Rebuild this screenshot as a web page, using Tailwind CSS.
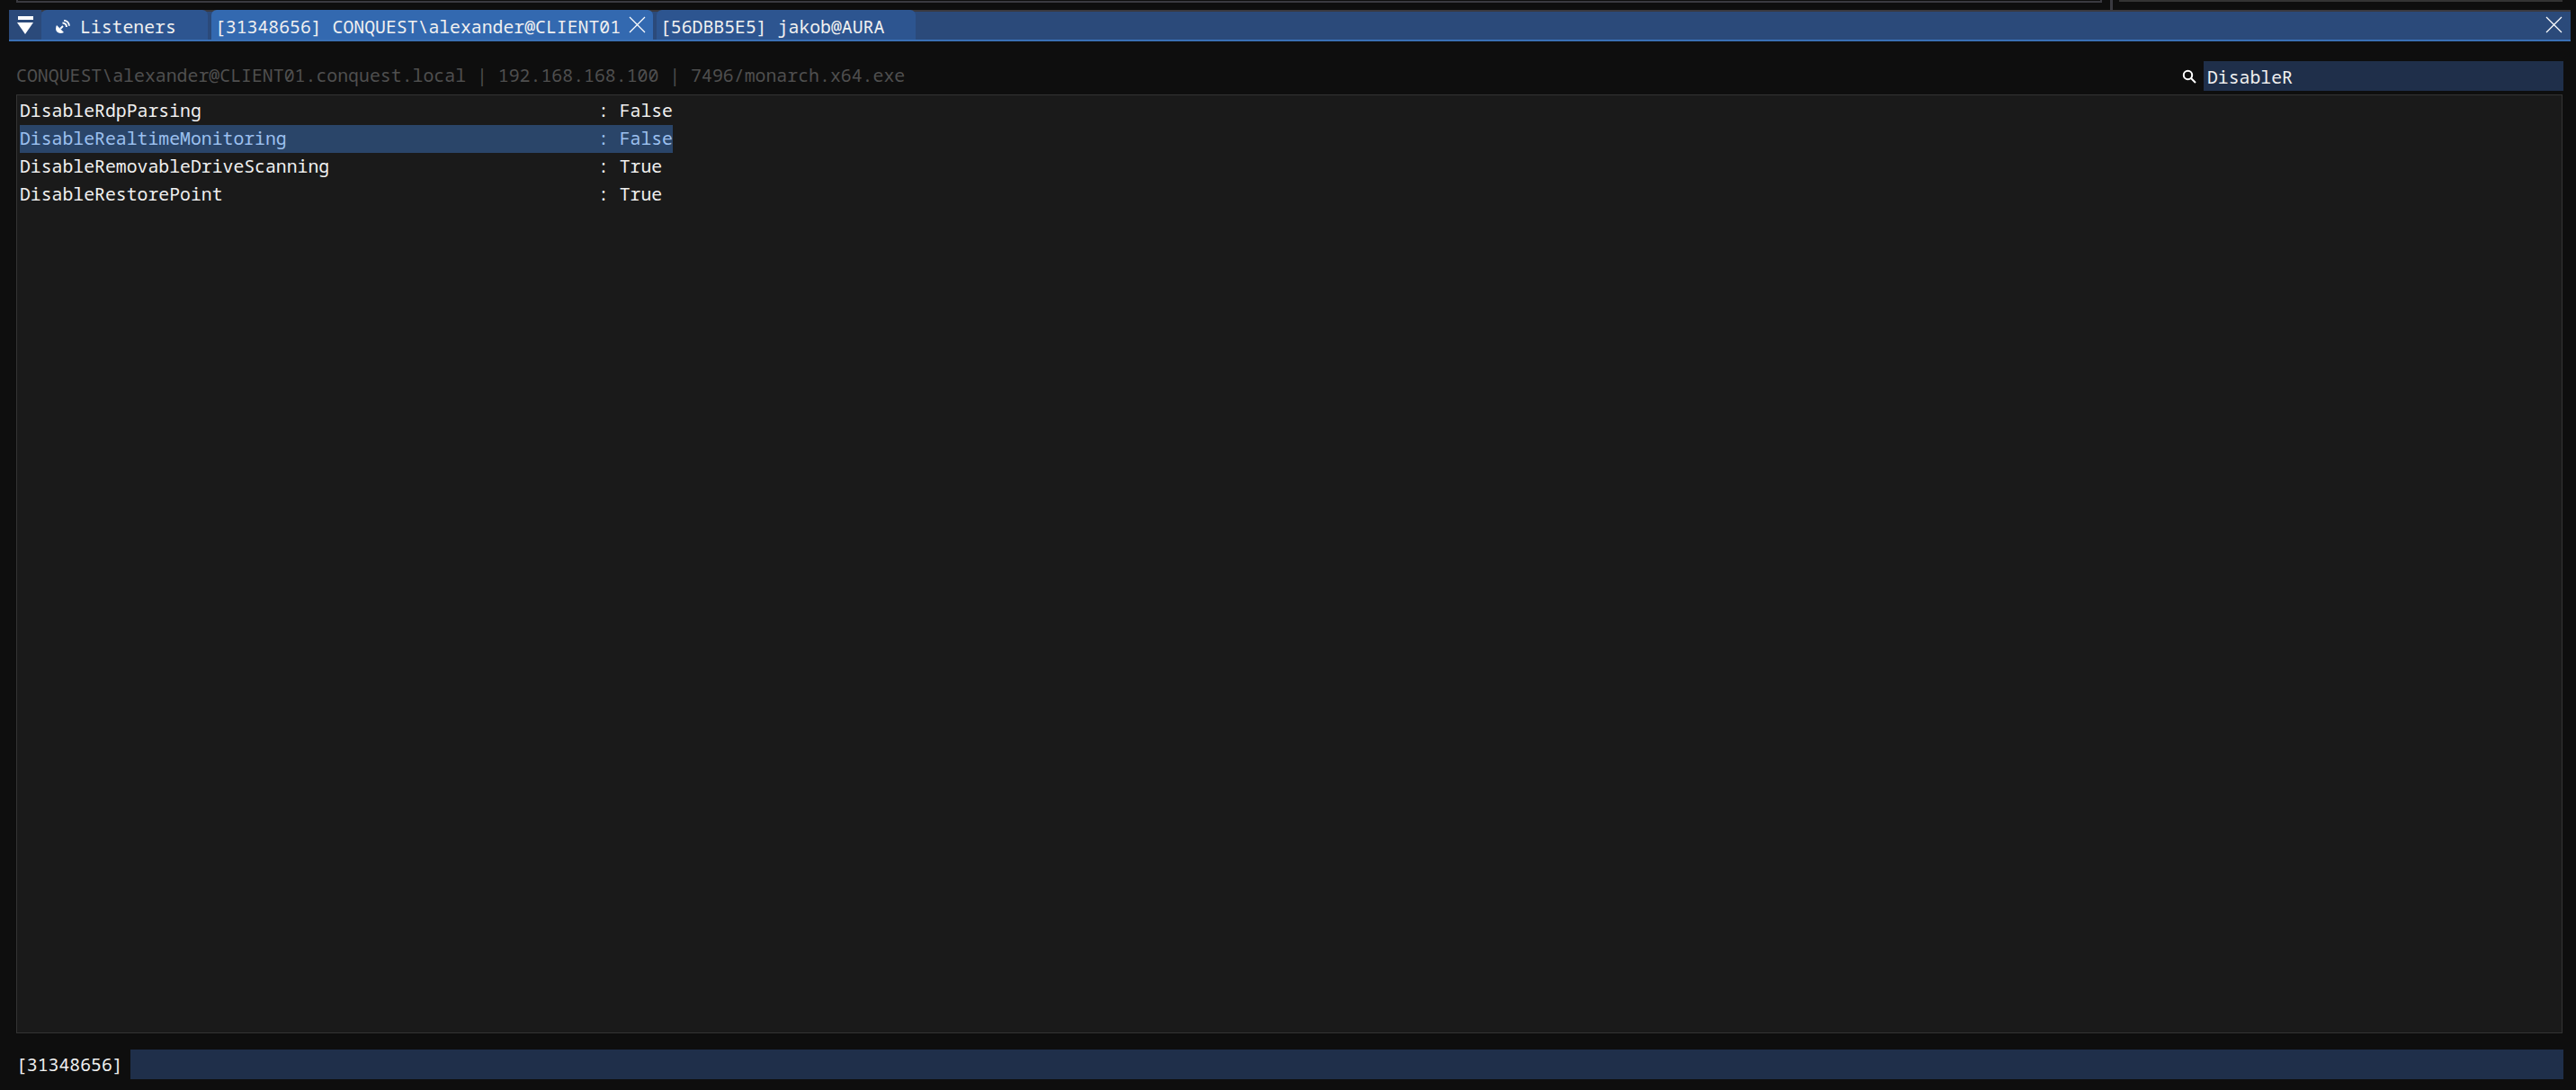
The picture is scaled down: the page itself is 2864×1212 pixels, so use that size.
<!DOCTYPE html>
<html lang="en">
<head>
    <meta charset="UTF-8">
    <title>Conquest</title>
    <script src="https://cdn.jsdelivr.net/npm/@tailwindcss/browser@4"></script>
</head>
<body class="bg-[#0e0e0e] w-[2864px] h-[1212px] overflow-hidden text-[19.8px] leading-[31px] text-[#f0f0f0] font-['Noto_Sans_Mono','DejaVu_Sans_Mono',monospace]">
    <!-- Panes above the dock -->
    <div class="flex h-[11px] pl-[18px] pr-[15px]">
        <div class="w-[2319px] h-[3px] border-b-2 border-x-2 border-[#3a3a40]"></div>
        <div class="w-[3px] h-[11px] ml-[9px] bg-[#3a3a40]"></div>
        <div class="flex-1 h-[2px] ml-[7px] border-b-2 border-[#333]"></div>
    </div>

    <!-- Tab bar -->
    <div class="ml-[10px] w-[2848px] h-[35px] flex items-end bg-[#2b4a7a] border-t-2 border-t-[#3a3a40] border-b-2 border-b-[#3a70b5]">
        <div class="w-[36px] h-[33px] flex flex-col items-center pt-[7px] bg-[#2b4a7a]">
            <div class="w-[17px] h-[4px] bg-white"></div>
            <svg class="mt-[3px]" width="18" height="13" viewBox="0 0 18 13"><path d="M0 0h18L9 13z" fill="#fff"/></svg>
        </div>
        <div class="w-[185px] h-[33px] flex items-center pl-[16px] pt-[4px] rounded-t-md bg-[#2d5590]">
            <svg width="16" height="15" viewBox="0 0 16 15" fill="none" stroke="#fff">
                <path d="M1 6l8 8c-3 1.500-6 1-7.500-.5S-.5 9 1 6z" fill="#fff" stroke="none"/>
                <path d="M5 10l3-3" stroke-width="2"/>
                <path d="M7.500 3.500c2.500 0 4.500 2 4.500 4.500" stroke-width="2"/>
                <path d="M9 .8c3.500 0 6 2.700 6 6" stroke-width="1.800"/>
            </svg>
            <span class="ml-[11px]">Listeners</span>
        </div>
        <div class="w-[491px] h-[33px] ml-[4px] flex items-center pl-[4px] pt-[4px] rounded-t-md bg-[#3369b0]">
            <span class="whitespace-pre">[31348656] CONQUEST\alexander@CLIENT01</span>
            <svg class="ml-[9px] -mt-[4px]" width="19" height="19" viewBox="0 0 19 19" stroke="#fff" stroke-width="1.200"><path d="M1 1l17 17M18 1L1 18"/></svg>
        </div>
        <div class="w-[288px] h-[33px] ml-[4px] flex items-center pl-[4px] pt-[4px] rounded-t-md bg-[#2d5590]">
            <span class="whitespace-pre">[56DBB5E5] jakob@AURA</span>
        </div>
        <div class="flex-1 h-[33px] flex items-center justify-end pr-[9px]">
            <svg width="19" height="19" viewBox="0 0 19 19" stroke="#fff" stroke-width="1.200"><path d="M1 1l17 17M18 1L1 18"/></svg>
        </div>
    </div>

    <!-- Info line and filter -->
    <div class="flex items-center h-[33px] mt-[22px] pl-[18px] pr-[14px]">
        <span class="flex-1 -mt-[3px] text-[19.85px] text-[#4f4f4f] whitespace-pre">CONQUEST\alexander@CLIENT01.conquest.local | 192.168.168.100 | 7496/monarch.x64.exe</span>
        <svg class="mr-[8px]" width="16" height="16" viewBox="0 0 16 16" fill="none" stroke="#fff" stroke-width="2"><circle cx="6.500" cy="6.500" r="4.700"/><path d="M10 10l5 5"/></svg>
        <div class="w-[400px] h-[33px] pl-[4px] pt-[2px] flex items-center bg-[#1f2f4a]">DisableR</div>
    </div>

    <!-- Output box -->
    <div class="mt-[4px] ml-[18px] w-[2831px] h-[1044px] pl-[3px] pt-[2px] leading-[29px] bg-[#1a1a1a] border border-[#333]">
        <div class="flex w-[726px] h-[31px]"><span class="w-[643px]">DisableRdpParsing</span><span class="whitespace-pre">: False</span></div>
        <div class="flex w-[726px] h-[31px] bg-[#2a4569] text-[#9cc0ef]"><span class="w-[643px]">DisableRealtimeMonitoring</span><span class="whitespace-pre">: False</span></div>
        <div class="flex w-[726px] h-[31px]"><span class="w-[643px]">DisableRemovableDriveScanning</span><span class="whitespace-pre">: True</span></div>
        <div class="flex w-[726px] h-[31px]"><span class="w-[643px]">DisableRestorePoint</span><span class="whitespace-pre">: True</span></div>
    </div>

    <!-- Command line -->
    <div class="flex items-center h-[33px] mt-[18px] pl-[18px] pr-[14px]">
        <span class="w-[127px]">[31348656]</span>
        <div class="flex-1 h-[33px] bg-[#1f2f4a]"></div>
    </div>
</body>
</html>
